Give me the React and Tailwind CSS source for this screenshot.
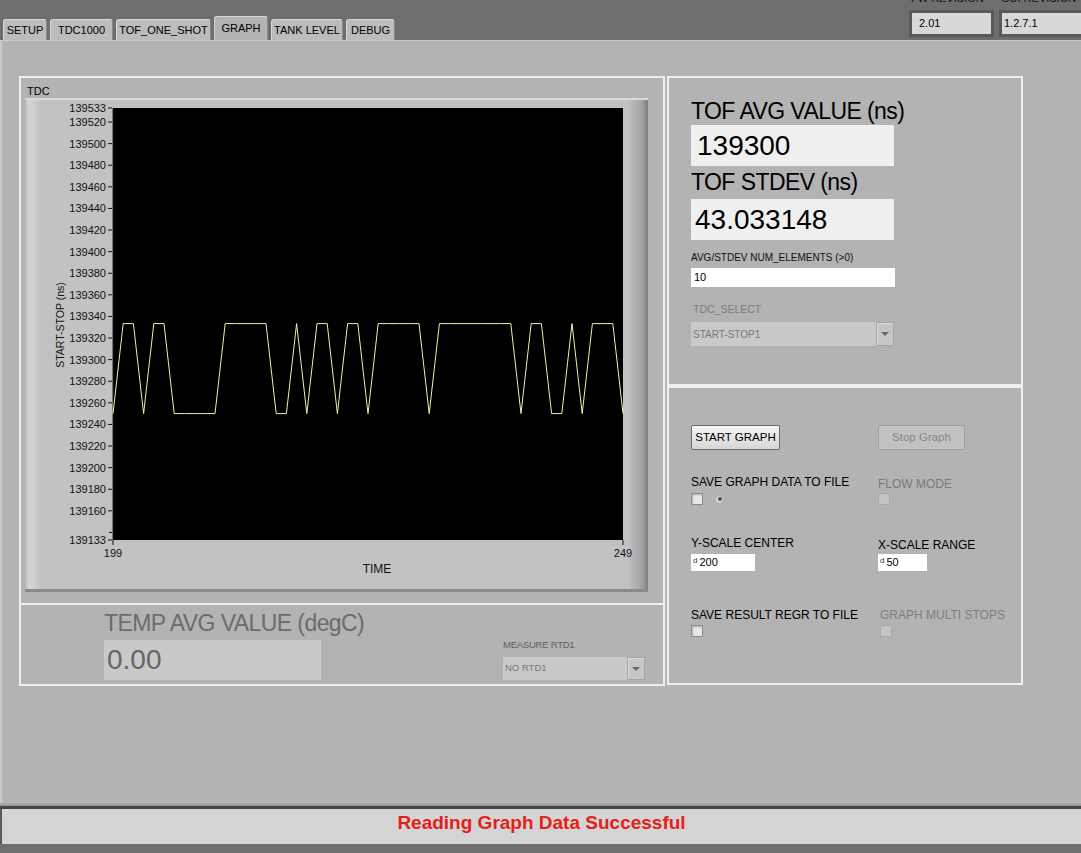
import React from 'react';

const segs = ['L', 'HH', 'L', 'HH', 'LLLLL', 'HHHHH', 'LL', 'H', 'L', 'HH', 'L', 'HH', 'L', 'HHHHH', 'L', 'HHHHHHHH', 'L', 'HH', 'LL', 'H', 'L', 'HHH', 'L'];
const samples = segs.join('').split('').map((c) => (c === 'H' ? 139333.33 : 139250));

// plot area inside the graph frame
const PLOT = { x: 88, y: 10, w: 510, h: 432 };
const Y_MIN = 139133;
const Y_MAX = 139533;
const toY = (v) => PLOT.y + ((Y_MAX - v) * PLOT.h) / (Y_MAX - Y_MIN);
const toX = (i) => PLOT.x + (i * PLOT.w) / (samples.length - 1);

const yTicks = [139533, ...Array.from({ length: 19 }, (_, k) => 139520 - k * 20), 139133];

const tabs = [
  { name: 'SETUP', w: 'w-[44px]' },
  { name: 'TDC1000', w: 'w-[63px]' },
  { name: 'TOF_ONE_SHOT', w: 'w-[95px]' },
  { name: 'GRAPH', w: 'w-[54px]', active: true },
  { name: 'TANK LEVEL', w: 'w-[72px]' },
  { name: 'DEBUG', w: 'w-[49px]' },
];

const Chart = () => {
  const points = samples.map((v, i) => `${toX(i).toFixed(1)},${toY(v).toFixed(1)}`).join(' ');
  return (
    <svg width="623" height="494" viewBox="0 0 623 494" className="block">
      <defs>
        <linearGradient id="leftEdge" x1="0" x2="1" y1="0" y2="0">
          <stop offset="0" stopColor="#b8b8b8" />
          <stop offset="0.25" stopColor="#d6d6d6" />
          <stop offset="1" stopColor="#c2c2c2" />
        </linearGradient>
        <linearGradient id="rightEdge" x1="0" x2="1" y1="0" y2="0">
          <stop offset="0" stopColor="#c2c2c2" />
          <stop offset="0.7" stopColor="#a2a2a2" />
          <stop offset="1" stopColor="#7c7c7c" />
        </linearGradient>
      </defs>
      <rect x="0" y="0" width="623" height="494" fill="#c2c2c2" />
      <rect x="0" y="0" width="16" height="494" fill="url(#leftEdge)" />
      <rect x="603" y="0" width="20" height="494" fill="url(#rightEdge)" />
      <rect x="0" y="0" width="623" height="2" fill="#d8d8d8" />
      <rect x="0" y="491" width="623" height="3" fill="#8a8a8a" />

      <rect x={PLOT.x} y={PLOT.y} width={PLOT.w} height={PLOT.h} fill="#000" />
      <line x1={PLOT.x} y1={PLOT.y} x2={PLOT.x} y2={PLOT.y + PLOT.h} stroke="#222" strokeWidth="1" />

      {yTicks.map((v) => (
        <g key={v}>
          <line x1="83" x2="87" y1={toY(v)} y2={toY(v)} stroke="#111" strokeWidth="1" />
          <text
            x="81"
            y={toY(v) + 4}
            textAnchor="end"
            fontFamily="'Liberation Sans', Arial, sans-serif"
            fontSize="11"
            fill="#111"
          >
            {v}
          </text>
        </g>
      ))}
      <line x1="84" x2="87" y1={toY(139140)} y2={toY(139140)} stroke="#111" strokeWidth="1" />

      <line x1={PLOT.x} x2={PLOT.x} y1={PLOT.y + PLOT.h} y2={PLOT.y + PLOT.h + 5} stroke="#111" />
      <line x1={PLOT.x + PLOT.w} x2={PLOT.x + PLOT.w} y1={PLOT.y + PLOT.h} y2={PLOT.y + PLOT.h + 5} stroke="#111" />
      <text x={PLOT.x} y="459" textAnchor="middle" fontFamily="'Liberation Sans', Arial, sans-serif" fontSize="11" fill="#111">
        199
      </text>
      <text x={PLOT.x + PLOT.w} y="459" textAnchor="middle" fontFamily="'Liberation Sans', Arial, sans-serif" fontSize="11" fill="#111">
        249
      </text>
      <text x="352" y="475" textAnchor="middle" fontFamily="'Liberation Sans', Arial, sans-serif" fontSize="12" fill="#111">
        TIME
      </text>
      <text
        x="0"
        y="0"
        transform="translate(39 227) rotate(-90)"
        textAnchor="middle"
        fontFamily="'Liberation Sans', Arial, sans-serif"
        fontSize="10.5"
        fill="#111"
      >
        START-STOP (ns)
      </text>

      <polyline points={points} fill="none" stroke="#f2f2a8" strokeWidth="1" />
    </svg>
  );
};

const Checkbox = ({ disabled }) => (
  <div
    className={
      disabled
        ? 'w-[12px] h-[12px] border border-[#a8a8a8] bg-[#c4c4c4]'
        : 'w-[12px] h-[12px] border border-[#8c8c8c] bg-[#e8e8e8] shadow-[inset_1px_1px_2px_#b0b0b0]'
    }
  />
);

const Dropdown = ({ value, w, h, text }) => (
  <div className={`${w} ${h} bg-[#c9c9c9] flex items-center`}>
    <span className={`flex-1 pl-[2px] ${text} text-[#777]`}>{value}</span>
    <div className="w-[18px] h-full border border-[#a6a6a6] bg-[#c6c6c6] flex items-center justify-center shadow-[inset_1px_1px_0_#dcdcdc]">
      <div className="w-0 h-0 border-l-[4px] border-r-[4px] border-t-[4px] border-l-transparent border-r-transparent border-t-[#6a6a6a]" />
    </div>
  </div>
);

const NumInput = ({ value, w }) => (
  <div className={`${w} h-[17px] bg-white flex items-center pl-[2px]`}>
    <span className="text-[8px] text-[#333] mr-[2px] -mt-[4px]">d</span>
    <span className="text-[11px] text-black">{value}</span>
  </div>
);

export default function App() {
  return (
    <div className="w-[1081px] h-[853px] bg-[#6e6e6e] flex flex-col font-['Liberation_Sans',Arial,sans-serif] text-black overflow-hidden">
      {/* tab strip + revisions */}
      <div className="h-[40px] flex items-end pl-[3px] overflow-hidden">
        <div className="flex items-end gap-[3px]">
          {tabs.map((t) =>
            t.active ? (
              <div
                key={t.name}
                className={`${t.w} h-[24px] bg-[#b3b3b3] rounded-t-[3px] border-t border-l border-[#d4d4d4] border-r border-r-[#8e8e8e] flex items-start justify-center pt-[3px] text-[11px]`}
              >
                {t.name}
              </div>
            ) : (
              <div
                key={t.name}
                className={`${t.w} h-[21px] bg-[#bcbcbc] rounded-t-[3px] border-t border-l border-[#d8d8d8] border-r border-r-[#8a8a8a] flex items-center justify-center pt-[1px] text-[11px]`}
              >
                {t.name}
              </div>
            )
          )}
        </div>
        <div className="ml-auto self-start flex gap-[5px] pr-0 -mr-[4px]">
          <div className="flex flex-col">
            <span className="text-[11px] leading-[11px] -mt-[7px] pl-[2px] text-[#111]">FW REVISION</span>
            <div className="mt-[6px] w-[85px] h-[27px] border-[3px] border-[#595959] bg-[#d8d8d8] text-[11px] flex items-center pl-[7px]">
              2.01
            </div>
          </div>
          <div className="flex flex-col">
            <span className="text-[11px] leading-[11px] -mt-[7px] pl-[2px] text-[#111]">GUI REVISION</span>
            <div className="mt-[6px] w-[86px] h-[27px] border-[3px] border-r-0 border-[#595959] bg-[#d8d8d8] text-[11px] flex items-center pl-[2px]">
              1.2.7.1
            </div>
          </div>
        </div>
      </div>

      {/* tab body */}
      <div className="h-[763px] bg-[#b3b3b3] border-t border-l-2 border-[#cacaca] flex items-start gap-[2px] pt-[35px] pl-[17px]">
        {/* left panel */}
        <div className="w-[646px] h-[610px] border-2 border-[#efefef] flex flex-col">
          <div className="h-[527px] border-b-2 border-[#efefef] pl-[4px] pt-[6px]">
            <div className="text-[11px] leading-[14px] pl-[2px]">TDC</div>
            <Chart />
          </div>
          <div className="flex-1 flex items-end pl-[83px] pr-[18px] pb-[4px]">
            <div className="flex flex-col w-[217px]">
              <span className="text-[23px] tracking-tight leading-[26px] text-[#6c6c6c] whitespace-nowrap">TEMP AVG VALUE (degC)</span>
              <div className="mt-[4px] h-[40px] bg-[#c9c9c9] text-[28px] text-[#666] flex items-center pl-[3px]">0.00</div>
            </div>
            <div className="ml-auto flex flex-col w-[142px]">
              <span className="text-[9.5px] leading-[12px] text-[#5e5e5e] tracking-tight">MEASURE RTD1</span>
              <div className="mt-[6px]">
                <Dropdown value="NO RTD1" w="w-[142px]" h="h-[23px]" text="text-[9.5px]" />
              </div>
            </div>
          </div>
        </div>

        {/* right column */}
        <div className="w-[356px] flex flex-col">
          <div className="h-[310px] border-2 border-[#efefef] pl-[22px] pt-[20px] flex flex-col items-start">
            <span className="text-[23px] tracking-tight leading-[27px]">TOF AVG VALUE (ns)</span>
            <div className="w-[203px] h-[41px] bg-[#efefef] text-[28px] flex items-center pl-[6px]">139300</div>
            <span className="text-[23px] tracking-tight leading-[33px]">TOF STDEV (ns)</span>
            <div className="w-[203px] h-[41px] bg-[#efefef] text-[28px] flex items-center pl-[4px]">43.033148</div>
            <span className="mt-[11px] text-[10px] leading-[13px] text-[#111]">AVG/STDEV NUM_ELEMENTS (&gt;0)</span>
            <div className="mt-[4px] w-[204px] h-[19px] bg-white text-[11px] flex items-center pl-[3px]">10</div>
            <span className="mt-[16px] text-[10.5px] leading-[13px] text-[#7c7c7c] pl-[2px]">TDC_SELECT</span>
            <div className="mt-[6px]">
              <Dropdown value="START-STOP1" w="w-[203px]" h="h-[24px]" text="text-[10px]" />
            </div>
          </div>

          <div className="h-[299px] border-2 border-[#efefef] pl-[22px] pt-[37px] flex flex-col">
            <div className="grid grid-cols-[187px_1fr]">
              <button className="w-[89px] h-[25px] rounded-[2px] border border-[#6c6c6c] bg-gradient-to-b from-[#f6f6f6] to-[#d6d6d6] text-[11.5px] text-black">
                START GRAPH
              </button>
              <button className="w-[87px] h-[25px] rounded-[2px] border border-[#a0a0a0] bg-[#c2c2c2] text-[11.5px] text-[#858585]">
                Stop Graph
              </button>
            </div>

            <div className="grid grid-cols-[187px_1fr] mt-[25px]">
              <div className="flex flex-col">
                <span className="text-[12px] leading-[14px]">SAVE GRAPH DATA TO FILE</span>
                <div className="mt-[4px] flex items-center gap-[12px]">
                  <Checkbox />
                  <div className="w-[9px] h-[9px] rounded-full border border-[#a8a8a8] bg-[#dcdcdc] flex items-center justify-center">
                    <div className="w-[4px] h-[4px] rounded-full bg-[#2f5f2f]" />
                  </div>
                </div>
              </div>
              <div className="flex flex-col pt-[2px]">
                <span className="text-[12px] leading-[14px] text-[#7a7a7a]">FLOW MODE</span>
                <div className="mt-[2px]">
                  <Checkbox disabled />
                </div>
              </div>
            </div>

            <div className="grid grid-cols-[187px_1fr] mt-[31px]">
              <div className="flex flex-col">
                <span className="text-[12px] leading-[14px]">Y-SCALE CENTER</span>
                <div className="mt-[4px]">
                  <NumInput value="200" w="w-[64px]" />
                </div>
              </div>
              <div className="flex flex-col">
                <span className="text-[12px] leading-[14px] pt-[2px]">X-SCALE RANGE</span>
                <div className="mt-[2px]">
                  <NumInput value="50" w="w-[49px]" />
                </div>
              </div>
            </div>

            <div className="grid grid-cols-[187px_1fr] mt-[37px]">
              <div className="flex flex-col">
                <span className="text-[12px] leading-[14px]">SAVE RESULT REGR TO FILE</span>
                <div className="mt-[3px]">
                  <Checkbox />
                </div>
              </div>
              <div className="flex flex-col pl-[2px]">
                <span className="text-[12px] leading-[14px] text-[#7e7e7e]">GRAPH MULTI STOPS</span>
                <div className="mt-[3px]">
                  <Checkbox disabled />
                </div>
              </div>
            </div>
          </div>
        </div>
      </div>

      {/* status bar */}
      <div className="h-[50px] flex flex-col">
        <div className="h-[3px] bg-gradient-to-b from-[#b0b0b0] to-[#8e8e8e]" />
        <div className="h-[3px] bg-[#464646]" />
        <div className="h-[35px] bg-[#d4d4d4] border-l-2 border-[#5a5a5a] flex items-center justify-center">
          <span className="text-[19px] font-bold text-[#e3211a] -mt-[7px]">Reading Graph Data Successful</span>
        </div>
        <div className="flex-1 bg-[#6e6e6e]" />
      </div>
    </div>
  );
}
